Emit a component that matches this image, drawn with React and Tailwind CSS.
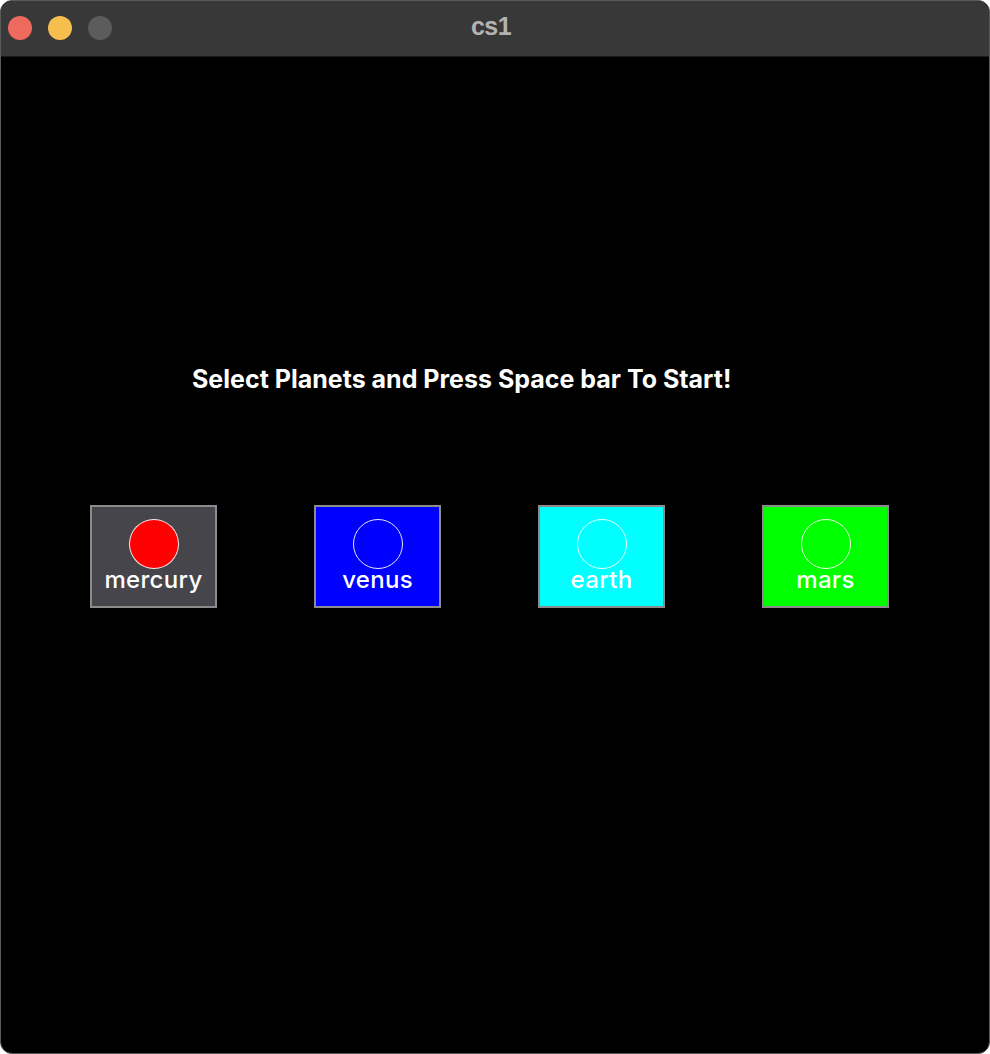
import React from 'react';

const planets = [
  { name: 'mercury', bg: 'bg-[#45454b]', dot: 'bg-[#ff0000]' },
  { name: 'venus', bg: 'bg-[#0000ff]', dot: 'bg-transparent' },
  { name: 'earth', bg: 'bg-[#00ffff]', dot: 'bg-transparent' },
  { name: 'mars', bg: 'bg-[#00ff00]', dot: 'bg-transparent' },
];

function PlanetButton({ planet }) {
  return (
    <div className={`w-[127px] h-[103px] border-2 border-[#8c8c8c] ${planet.bg} flex flex-col items-center pt-[12px]`}>
      <div className={`w-[50px] h-[50px] rounded-full border border-white/90 ${planet.dot}`} />
      <span className="mt-[-3px] text-[24px] leading-[28px] text-white font-medium font-['Inter',sans-serif] tracking-[0.3px]">{planet.name}</span>
    </div>
  );
}

export default function App() {
  return (
    <div className="w-[990px] h-[1054px] bg-white">
      <div className="w-full h-full rounded-[12px] overflow-hidden bg-black flex flex-col border border-[#5a5a5a]">
        {/* title bar */}
        <div className="h-[56px] bg-[#383838] border-b border-[#1a1a1a] flex items-center relative shrink-0">
          <div className="flex gap-[16px] pl-[7px] mt-[-2px]">
            <div className="w-[24px] h-[24px] rounded-full bg-[#ee6a5f]" />
            <div className="w-[24px] h-[24px] rounded-full bg-[#f5be4f]" />
            <div className="w-[24px] h-[24px] rounded-full bg-[#5c5c5c]" />
          </div>
          <div className="absolute inset-0 flex items-center justify-center">
            <span className="text-[25px] font-bold text-[#b3b3b3] font-['Liberation_Sans',sans-serif] ml-[-8px] mt-[-4px] tracking-[-0.5px]">cs1</span>
          </div>
        </div>

        {/* game area */}
        <div className="flex-1 flex flex-col">
          <div className="pt-[306px] pl-[191px]">
            <p className="text-white font-bold text-[25px] leading-[32px] font-['Inter',sans-serif]">
              Select Planets and Press Space bar To Start!
            </p>
          </div>
          <div className="flex gap-[97px] pl-[89px] mt-[110px]">
            {planets.map((p) => (
              <PlanetButton key={p.name} planet={p} />
            ))}
          </div>
        </div>
      </div>
    </div>
  );
}
